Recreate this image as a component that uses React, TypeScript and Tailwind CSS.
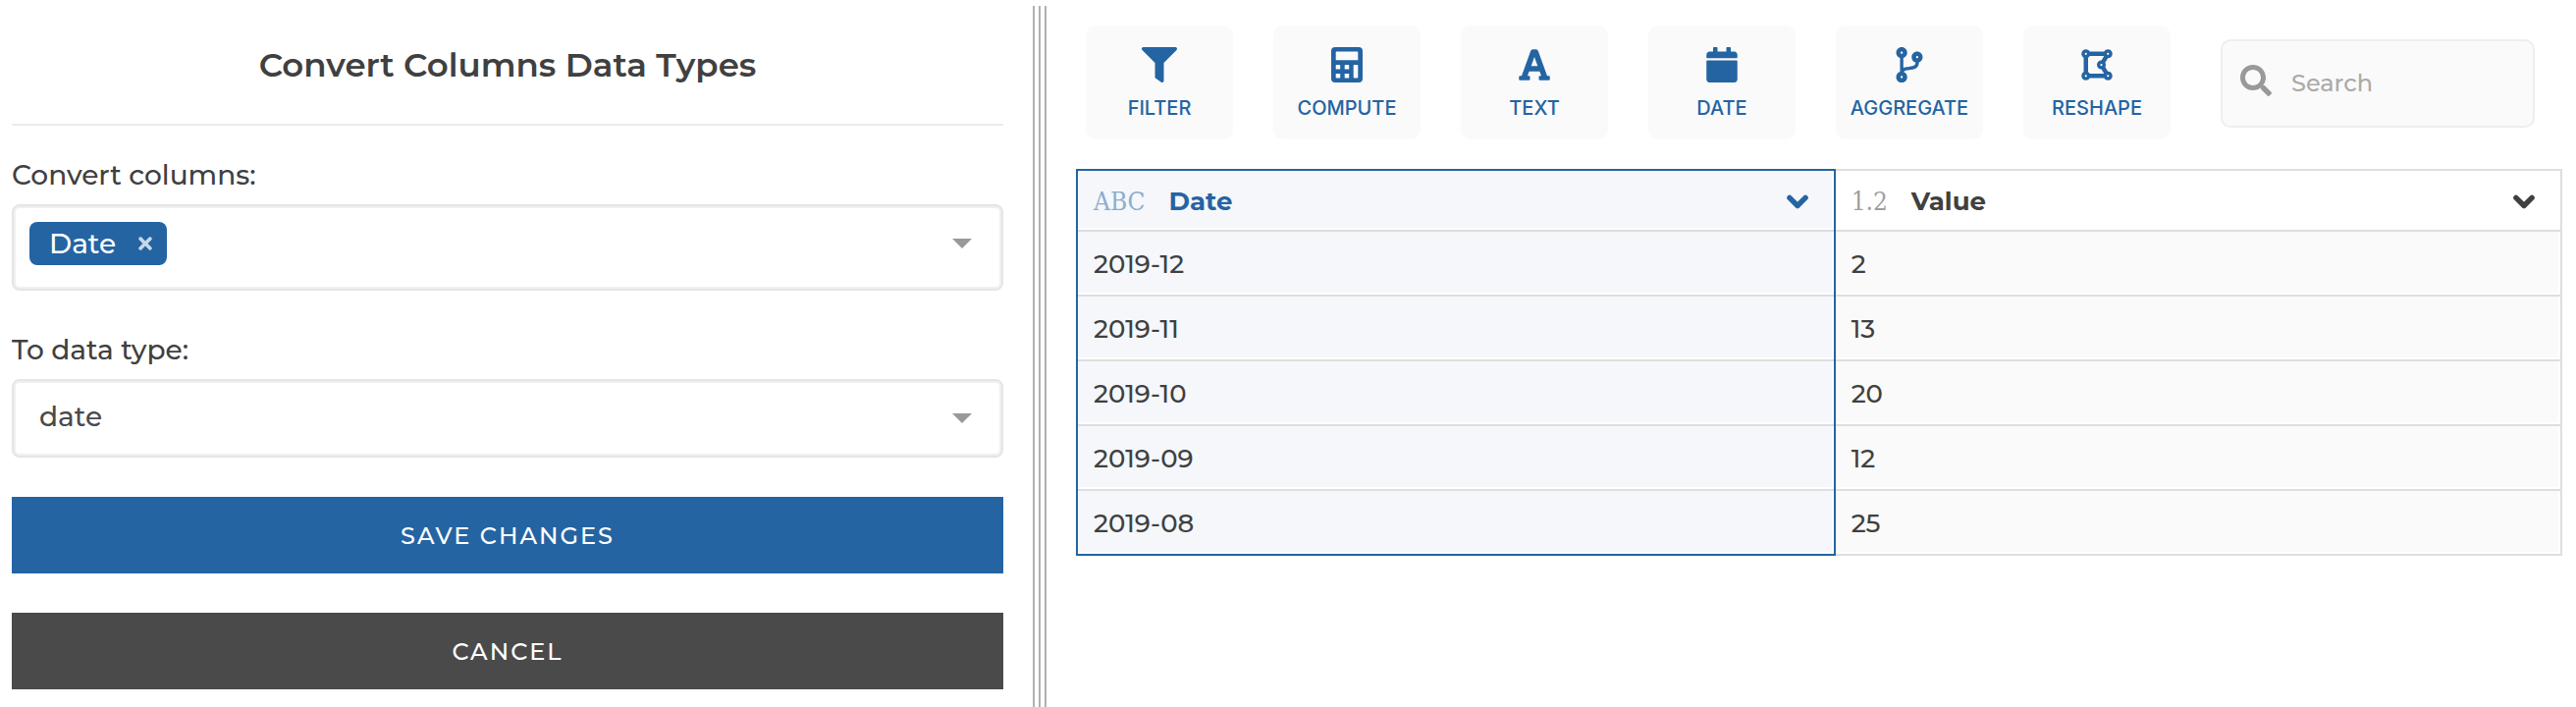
import { useState } from "react";
import type { ReactNode } from "react";
import {
  FaCalendar,
  FaCodeBranch,
  FaDrawPolygon,
  FaFilter,
  FaFont,
  FaSearch,
  FaTimes,
} from "react-icons/fa";

function CalculatorIcon() {
  return (
    <svg viewBox="0 0 32 36" className="h-9 w-8" aria-hidden="true">
      <path
        fill="currentColor"
        fillRule="evenodd"
        d="M4 0h24a4 4 0 0 1 4 4v28a4 4 0 0 1-4 4H4a4 4 0 0 1-4-4V4a4 4 0 0 1 4-4zM5.5 4.5a.8.8 0 0 0-.8.8v8h22.6v-8a.8.8 0 0 0-.8-.8zM5.5 18a.8.8 0 0 0-.8.8v3.7h4.500v-3.7a.8.8 0 0 0-.8-.8zM14.500 18a.8.8 0 0 0-.8.8v3.7h4.500v-3.7a.8.8 0 0 0-.8-.8zM23.500 18a.8.8 0 0 0-.8.8v11.900a.8.8 0 0 0 .8.8h3a.8.8 0 0 0 .8-.8V18.800a.8.8 0 0 0-.8-.8zM4.700 27v3.700a.8.8 0 0 0 .8.8h3.700V27zM13.700 27v4.500h4.500V27z"
      />
    </svg>
  );
}

function ChevronIcon() {
  return (
    <svg viewBox="0 0 22 15" className="h-[15px] w-[22px]" aria-hidden="true">
      <path
        d="M2.900 3.400 11 11.500l8.100-8.100"
        fill="none"
        stroke="currentColor"
        strokeWidth="5.400"
        strokeLinecap="round"
        strokeLinejoin="round"
      />
    </svg>
  );
}

const tools: { label: string; icon: ReactNode }[] = [
  { label: "Filter", icon: <FaFilter className="size-9" /> },
  { label: "Compute", icon: <CalculatorIcon /> },
  { label: "Text", icon: <FaFont className="size-9" /> },
  { label: "Date", icon: <FaCalendar className="size-9" /> },
  { label: "Aggregate", icon: <FaCodeBranch className="size-9" /> },
  { label: "Reshape", icon: <FaDrawPolygon className="size-9" /> },
];

const rows = [
  { date: "2019-12", value: 2 },
  { date: "2019-11", value: 13 },
  { date: "2019-10", value: 20 },
  { date: "2019-09", value: 12 },
  { date: "2019-08", value: 25 },
];

function Caret() {
  return (
    <svg viewBox="0 0 20 10" className="h-2.5 w-5 fill-[#999999]" aria-hidden="true">
      <path d="M0 0h20L10 10z" />
    </svg>
  );
}

function ConvertPanel() {
  const [columns, setColumns] = useState(["Date"]);
  const [type, setType] = useState("date");
  const box =
    "rounded-lg border-2 border-[#e5e5e5] bg-white shadow-[inset_0_0_0_2px_#f0f0f0]";

  return (
    <form className="pr-[30px] pl-3" onSubmit={(e) => e.preventDefault()}>
      <h1 className="border-b-2 border-[#ececec] pt-11 pb-[38px] text-center text-[34px] leading-11 font-semibold">
        Convert Columns Data Types
      </h1>

      <div className="pt-[30px]">
        <label htmlFor="columns" className="block text-[28px] leading-10 font-medium">
          Convert columns:
        </label>
        <div className={`mt-2.5 flex h-[88px] items-start gap-4 px-4 pt-4 pr-[30px] ${box}`}>
          {columns.map((name) => (
            <span
              key={name}
              className="flex h-11 items-center gap-5 rounded-lg bg-[#2464a3] pr-3 pl-5 text-[28px] font-medium text-white"
            >
              {name}
              <button
                type="button"
                aria-label={`Remove ${name}`}
                className="text-[#c8d8e8]"
                onClick={() => setColumns(columns.filter((c) => c !== name))}
              >
                <FaTimes className="size-5" />
              </button>
            </span>
          ))}
          <input id="columns" className="h-11 min-w-0 flex-1 text-[28px] outline-none" />
          <span className="flex h-11 items-center">
            <Caret />
          </span>
        </div>
      </div>

      <div className="pt-10">
        <label htmlFor="type" className="block text-[28px] leading-10 font-medium">
          To data type:
        </label>
        <div className="mt-2.5 grid items-center">
          <select
            id="type"
            value={type}
            onChange={(e) => setType(e.target.value)}
            className={`col-start-1 row-start-1 h-20 w-full appearance-none px-[26px] pb-1 text-[28px] font-medium text-[#4a4a4a] ${box}`}
          >
            <option value="date">date</option>
            <option value="text">text</option>
            <option value="number">number</option>
          </select>
          <span className="pointer-events-none col-start-1 row-start-1 mr-8 justify-self-end">
            <Caret />
          </span>
        </div>
      </div>

      <div className="mt-10 flex flex-col gap-10 text-2xl font-medium tracking-[2px] text-white">
        <button type="submit" className="h-[78px] bg-[#2464a3] pt-0.5">
          SAVE CHANGES
        </button>
        <button type="button" className="h-[78px] bg-[#4a4a4a] pt-0.5">
          CANCEL
        </button>
      </div>
    </form>
  );
}

function Toolbar() {
  return (
    <div className="flex items-start justify-between gap-10 pt-[26px] pr-7 pl-2.5">
      <div className="flex gap-[41px]">
        {tools.map((tool) => (
          <button
            key={tool.label}
            type="button"
            className="flex h-[116px] w-[150px] flex-col items-center gap-3 rounded-[10px] bg-[#fafafa] pt-[22px] font-['Inter',sans-serif] text-xl leading-7 font-medium text-[#2464a3] uppercase"
          >
            {tool.icon}
            {tool.label}
          </button>
        ))}
      </div>
      <label className="mt-3.5 flex h-[90px] w-80 items-center gap-5 rounded-[10px] border-2 border-[#eeeeee] bg-[#fafafa] px-[18px]">
        <FaSearch className="mb-1.5 size-8 shrink-0 text-[#999999]" />
        <input
          type="search"
          aria-label="Search"
          placeholder="Search"
          className="w-full min-w-0 text-2xl font-medium outline-none placeholder:text-[#aaaaaa]"
        />
      </label>
    </div>
  );
}

function HeaderCell({ kind, name }: { kind: string; name: string }) {
  return (
    <>
      <span className="font-['Roboto_Slab','DejaVu_Serif_Condensed','DejaVu_Serif',serif] font-normal opacity-50">
        {kind}
      </span>
      <span className="ml-6 font-bold">{name}</span>
      <button type="button" aria-label={`${name} column menu`} className="ml-auto">
        <ChevronIcon />
      </button>
    </>
  );
}

function DataTable() {
  const cell = "flex items-center border-[#dedede] pl-4 pt-0.5";
  return (
    <table className="mt-[30px] w-full table-fixed border-separate border-spacing-0 text-left text-[26px]">
      <colgroup>
        <col className="w-[51.1%]" />
        <col />
      </colgroup>
      <thead>
        <tr>
          <th className="border-x-2 border-t-2 border-[#2464a3] p-0 text-[#2464a3]">
            <div
              className={`h-[62px] border-b-2 bg-[#f5f7fb] pr-[26px] shadow-[inset_-2px_-2px_0_white] ${cell}`}
            >
              <HeaderCell kind="ABC" name="Date" />
            </div>
          </th>
          <th className="border-t-2 border-r-2 border-[#dedede] p-0">
            <div className={`h-[62px] border-b-2 pr-[26px] ${cell}`}>
              <HeaderCell kind="1.2" name="Value" />
            </div>
          </th>
        </tr>
      </thead>
      <tbody className="font-medium">
        {rows.map((row, i) => {
          const last = i === rows.length - 1;
          const line = last ? "h-16" : "h-[66px] border-b-2";
          return (
            <tr key={row.date}>
              <td className={`border-x-2 border-[#2464a3] p-0 ${last ? "border-b-2" : ""}`}>
                <div
                  className={`bg-[#f5f7fb] shadow-[inset_-2px_-2px_0_white] ${cell} ${line}`}
                >
                  {row.date}
                </div>
              </td>
              <td className={`border-r-2 border-[#dedede] p-0 ${last ? "border-b-2" : ""}`}>
                <div
                  className={`bg-[#fafafa] shadow-[inset_-2px_-2px_0_white] ${cell} ${line}`}
                >
                  {row.value}
                </div>
              </td>
            </tr>
          );
        })}
      </tbody>
    </table>
  );
}

export default function App() {
  return (
    <div className="grid min-h-screen grid-cols-[minmax(0,1052fr)_minmax(0,1572fr)] bg-white font-['Montserrat','Inter',sans-serif] text-[#404040]">
      <ConvertPanel />
      <div className="flex">
        <div className="mt-1.5 flex w-3.5 shrink-0 gap-1" role="separator">
          <span className="w-0.5 bg-[#b0b0b0]" />
          <span className="w-0.5 bg-[#b0b0b0]" />
          <span className="w-0.5 bg-[#b0b0b0]" />
        </div>
        <main className="min-w-0 flex-1 pr-3.5 pl-[30px]">
          <Toolbar />
          <DataTable />
        </main>
      </div>
    </div>
  );
}
